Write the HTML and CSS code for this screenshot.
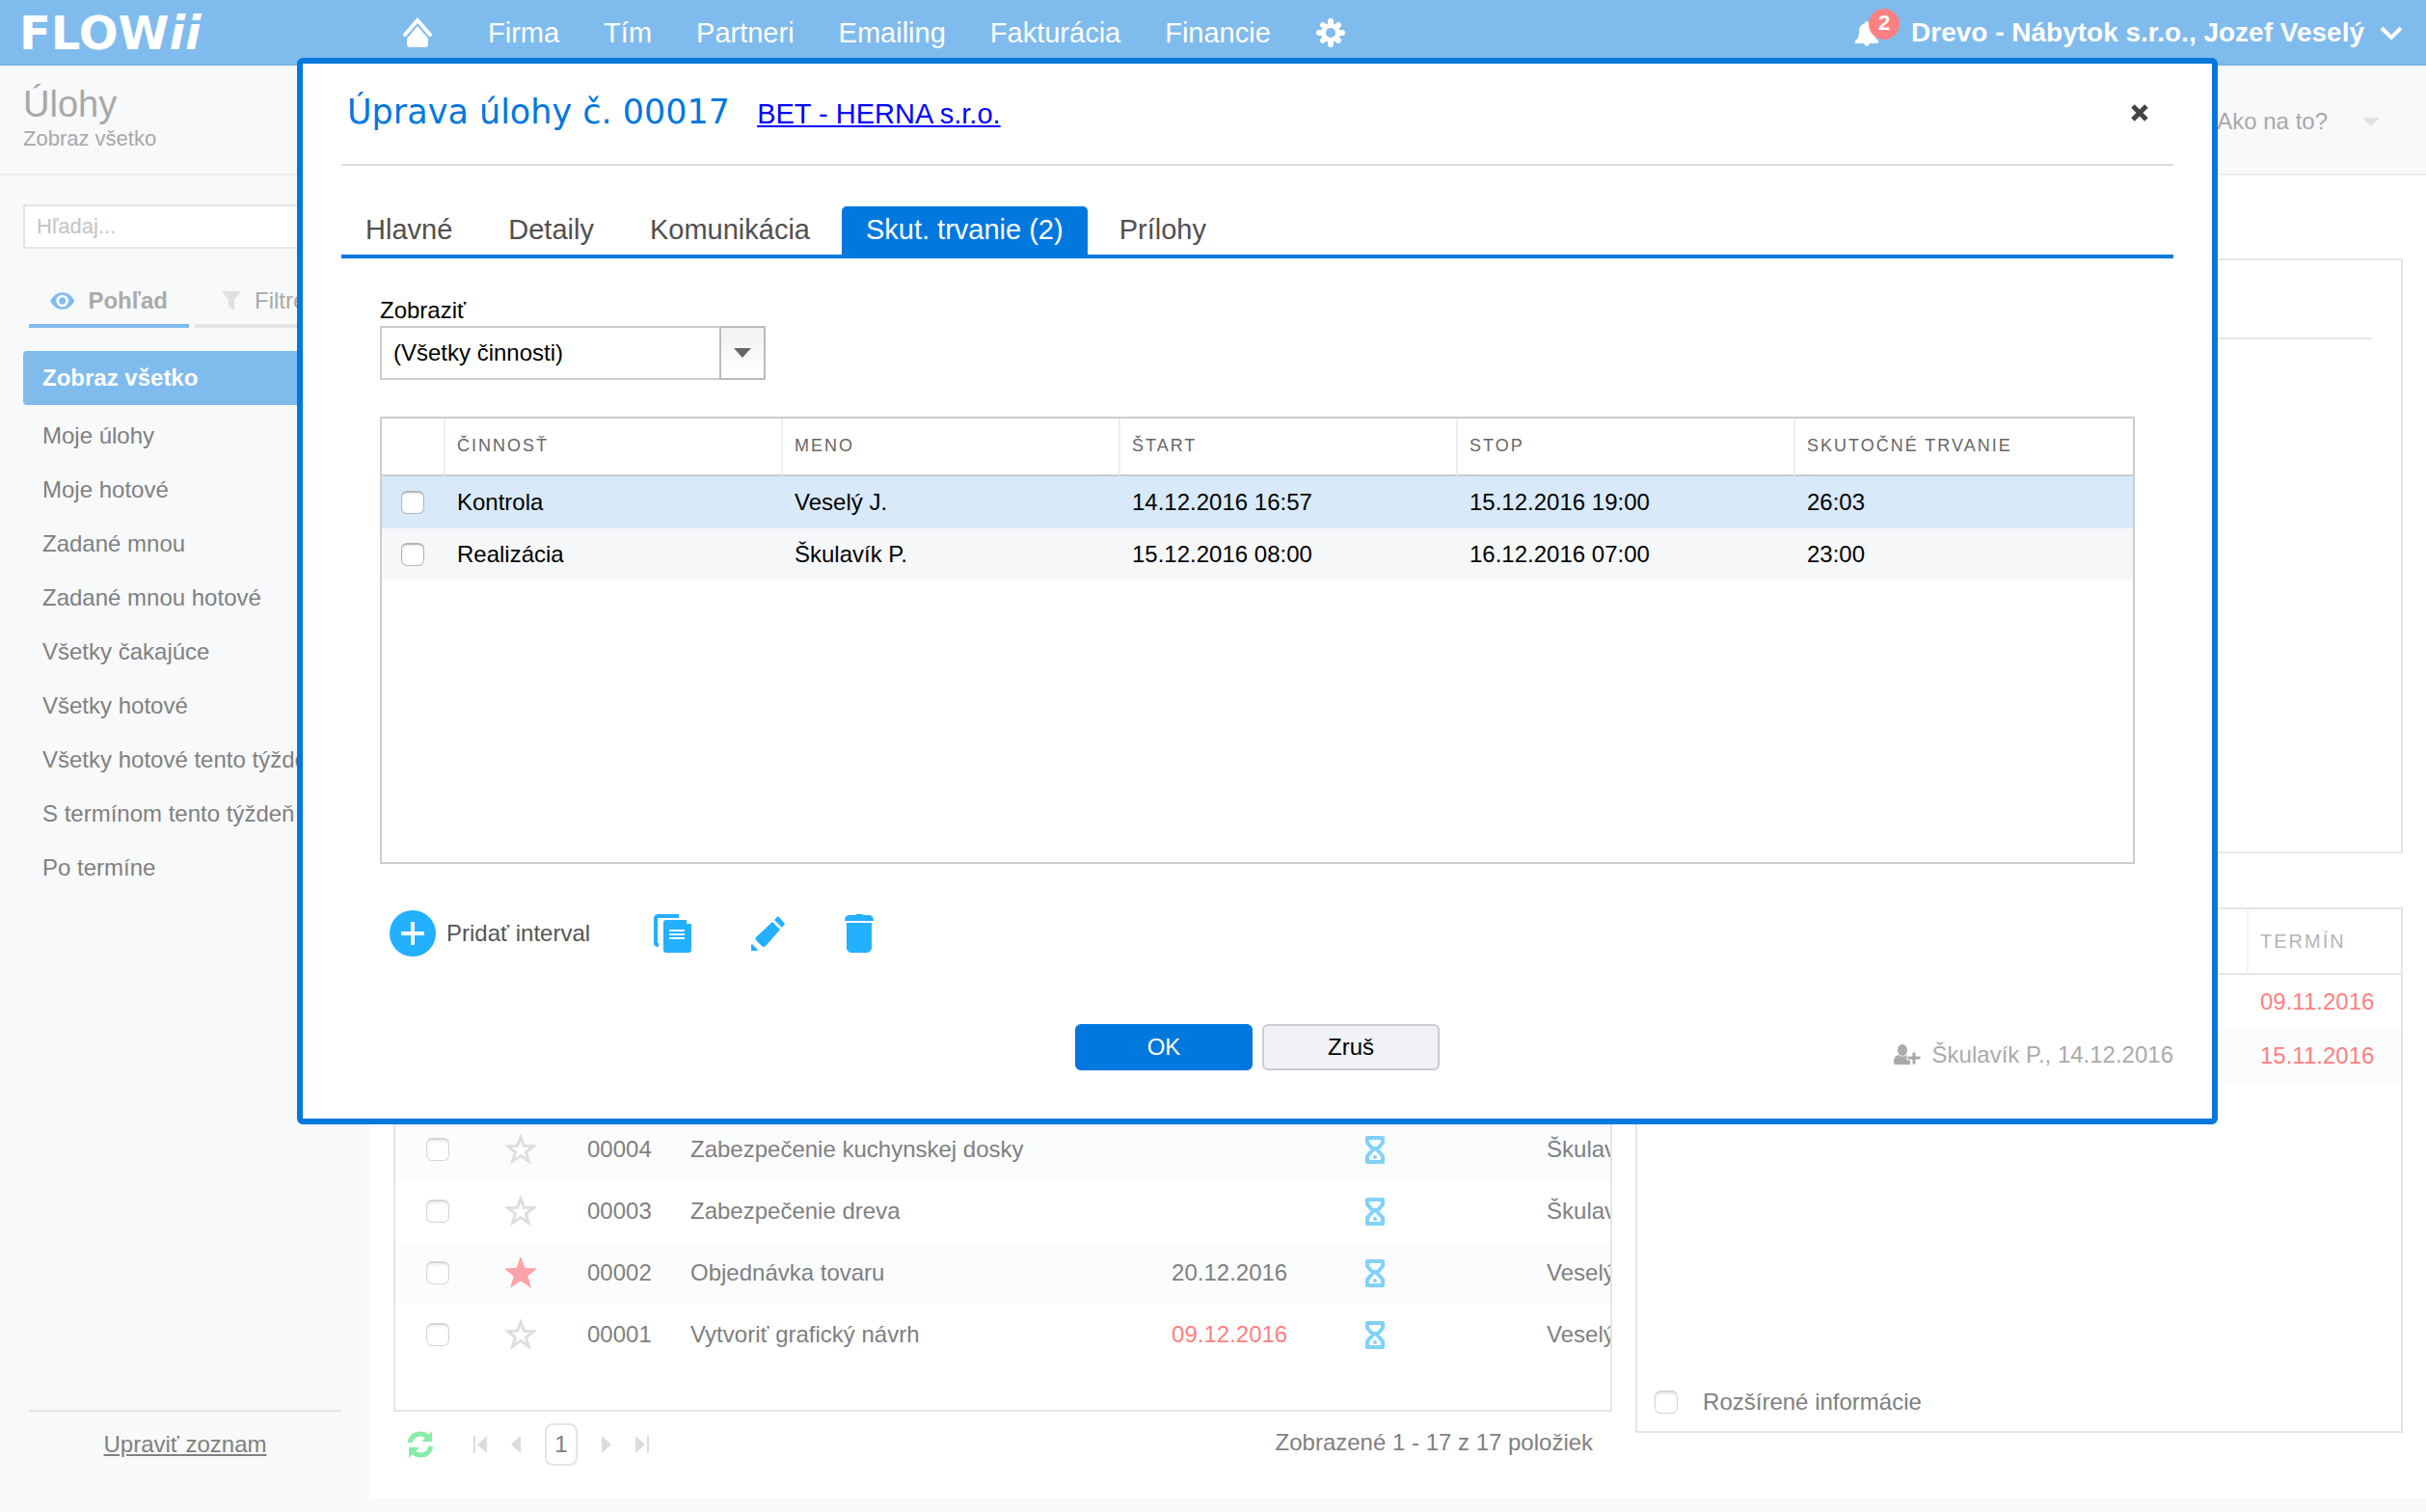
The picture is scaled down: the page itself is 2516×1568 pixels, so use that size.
FILE: index.html
```html
<!DOCTYPE html>
<html lang="sk">
<head>
  <meta charset="UTF-8">
  <title>Flowii - Úlohy</title>
  <link rel="stylesheet" href="styles.css">
</head>
<body>

  <!-- icons -->
  <svg class="sprite" aria-hidden="true">
    <symbol id="i-star" viewBox="0 0 32 32">
      <path d="M16 3l3.4 9.3 9.9.3-7.8 6.1 2.8 9.5L16 22.600l-8.300 5.600 2.800-9.500-7.800-6.100 9.900-.3z"/>
    </symbol>
    <symbol id="i-glass" viewBox="0 0 22 32">
      <path d="M3 4h16v5l-6 7 6 7v6H3v-6l6-7-6-7z" fill="#fff" stroke="#7fd2f8" stroke-width="4" stroke-linejoin="round"/>
      <path d="M7 13h8l-4 5z" fill="#7fd2f8"/>
      <circle cx="11" cy="24" r="2" fill="#7fd2f8"/>
    </symbol>
  </svg>

  <header class="topbar">
    <a class="logo" href="#">FLOW<i>ii</i></a>
    <nav class="nav">
      <a class="home" href="#" aria-label="Domov">
        <svg width="32" height="32" viewBox="0 0 32 32">
          <path d="M3 18L16 3l13 15" fill="none" stroke="#fff" stroke-width="4" stroke-linecap="round"/>
          <path d="M16 9l11 13v6q0 3-3 3H8q-3 0-3-3v-6z" fill="#fff"/>
        </svg>
      </a>
      <a href="#">Firma</a>
      <a href="#">Tím</a>
      <a href="#">Partneri</a>
      <a href="#">Emailing</a>
      <a href="#">Fakturácia</a>
      <a href="#">Financie</a>
      <a class="gear" href="#" aria-label="Nastavenia">
        <svg width="32" height="32" viewBox="0 0 32 32">
          <g stroke="#fff" stroke-width="6" stroke-linecap="round">
            <path d="M16 4v24M4 16h24M8 8l16 16M24 8L8 24"/>
          </g>
          <circle cx="16" cy="16" r="10" fill="#fff"/>
          <circle cx="16" cy="16" r="5" fill="#80bbed"/>
        </svg>
      </a>
    </nav>
    <a class="bell" href="#" aria-label="Upozornenia">
      <svg width="26" height="28" viewBox="0 0 26 28">
        <path d="M13 1q2 0 2 2 6 2 6 9 0 7 4 9v3H1v-3q4-2 4-9 0-7 6-9 0-2 2-2z" fill="#fff"/>
        <path d="M10 24h6q-1 3-3 3t-3-3z" fill="#fff"/>
      </svg>
      <span class="badge">2</span>
    </a>
    <button class="user" type="button">
      Drevo - Nábytok s.r.o., Jozef Veselý
      <svg width="24" height="16" viewBox="0 0 24 16"><path d="M2 3l10 10L22 3" fill="none" stroke="#fff" stroke-width="4"/></svg>
    </button>
  </header>

  <div class="subbar">
    <div>
      <h1>Úlohy</h1>
      <p>Zobraz všetko</p>
    </div>
    <button class="howto" type="button">
      Ako na to?
      <svg width="18" height="9" viewBox="0 0 18 9"><path d="M0 0h18L9 9z" fill="#dfe3e6"/></svg>
    </button>
  </div>

  <div class="page">
    <aside class="sidebar">
      <input class="search" type="text" placeholder="Hľadaj..." aria-label="Hľadaj">
      <div class="side-tabs">
        <button class="side-tab active" type="button">
          <svg width="26" height="20" viewBox="0 0 26 20">
            <path d="M0 10Q5 1 13 1t13 9q-5 9-13 9T0 10z" fill="#80bbed"/>
            <circle cx="13" cy="10" r="5" fill="#80bbed" stroke="#f8f9fb" stroke-width="3"/>
          </svg>
          Pohľad
        </button>
        <button class="side-tab" type="button">
          <svg width="20" height="20" viewBox="0 0 20 20"><path d="M0 0h20l-7 9v11l-6-4V9z" fill="#e0e0e0"/></svg>
          Filtre
        </button>
      </div>
      <nav class="views">
        <a class="active" href="#">Zobraz všetko</a>
        <a href="#">Moje úlohy</a>
        <a href="#">Moje hotové</a>
        <a href="#">Zadané mnou</a>
        <a href="#">Zadané mnou hotové</a>
        <a href="#">Všetky čakajúce</a>
        <a href="#">Všetky hotové</a>
        <a href="#">Všetky hotové tento týždeň</a>
        <a href="#">S termínom tento týždeň</a>
        <a href="#">Po termíne</a>
      </nav>
      <div class="side-footer"><a href="#">Upraviť zoznam</a></div>
    </aside>

    <main class="work">
      <section class="list">
        <div class="list-box">
          <table class="tasks">
            <colgroup>
              <col class="c-check"><col class="c-star"><col class="c-num"><col><col class="c-date"><col class="c-state"><col class="c-who">
            </colgroup>
            <tr>
              <td><input type="checkbox" aria-label="00004"></td>
              <td><svg class="star"><use href="#i-star"/></svg></td>
              <td>00004</td>
              <td>Zabezpečenie kuchynskej dosky</td>
              <td></td>
              <td><svg class="glass"><use href="#i-glass"/></svg></td>
              <td>Škulavík P.</td>
            </tr>
            <tr>
              <td><input type="checkbox" aria-label="00003"></td>
              <td><svg class="star"><use href="#i-star"/></svg></td>
              <td>00003</td>
              <td>Zabezpečenie dreva</td>
              <td></td>
              <td><svg class="glass"><use href="#i-glass"/></svg></td>
              <td>Škulavík P.</td>
            </tr>
            <tr>
              <td><input type="checkbox" aria-label="00002"></td>
              <td><svg class="star on"><use href="#i-star"/></svg></td>
              <td>00002</td>
              <td>Objednávka tovaru</td>
              <td>20.12.2016</td>
              <td><svg class="glass"><use href="#i-glass"/></svg></td>
              <td>Veselý J.</td>
            </tr>
            <tr>
              <td><input type="checkbox" aria-label="00001"></td>
              <td><svg class="star"><use href="#i-star"/></svg></td>
              <td>00001</td>
              <td>Vytvoriť grafický návrh</td>
              <td class="late">09.12.2016</td>
              <td><svg class="glass"><use href="#i-glass"/></svg></td>
              <td>Veselý J.</td>
            </tr>
          </table>
        </div>
        <div class="pager">
          <button class="refresh" type="button" aria-label="Obnoviť">
            <svg width="28" height="30" viewBox="0 0 28 30">
              <g fill="none" stroke="#86eda9" stroke-width="5">
                <path d="M3 13Q5 4 14 4q5 0 8 4"/>
                <path d="M25 17q-2 9-11 9-5 0-8-4"/>
              </g>
              <path d="M26 1v11H15zM2 29V18h11z" fill="#86eda9"/>
            </svg>
          </button>
          <button type="button" aria-label="Prvá"><svg width="14" height="18" viewBox="0 0 14 18"><path d="M0 0h2v18H0zM14 0v18L4 9z"/></svg></button>
          <button type="button" aria-label="Predošlá"><svg width="10" height="18" viewBox="0 0 10 18"><path d="M10 0v18L0 9z"/></svg></button>
          <button class="page-no" type="button">1</button>
          <button type="button" aria-label="Ďalšia"><svg width="10" height="18" viewBox="0 0 10 18"><path d="M0 0v18l10-9z"/></svg></button>
          <button type="button" aria-label="Posledná"><svg width="14" height="18" viewBox="0 0 14 18"><path d="M12 0h2v18h-2zM0 0v18l10-9z"/></svg></button>
          <span class="count">Zobrazené 1 - 17 z 17 položiek</span>
        </div>
      </section>

      <section class="side-panels">
        <div class="panel info"><div class="info-head"></div></div>
        <div class="panel terms">
          <table>
            <thead><tr><th></th><th>TERMÍN</th></tr></thead>
            <tbody>
              <tr><td></td><td>09.11.2016</td></tr>
              <tr><td></td><td>15.11.2016</td></tr>
            </tbody>
          </table>
          <label class="extended"><input type="checkbox"> Rozšírené informácie</label>
        </div>
      </section>
    </main>
  </div>

  <div class="modal" role="dialog" aria-labelledby="modal-title">
    <div class="modal-head">
      <h2 id="modal-title">Úprava úlohy č. 00017</h2>
      <a href="#">BET - HERNA s.r.o.</a>
      <button class="close" type="button" aria-label="Zavrieť">
        <svg width="18" height="18" viewBox="0 0 18 18"><path d="M2 2l14 14M16 2L2 16" stroke="#444" stroke-width="5"/></svg>
      </button>
    </div>

    <div class="tabs">
      <button type="button">Hlavné</button>
      <button type="button">Detaily</button>
      <button type="button">Komunikácia</button>
      <button class="active" type="button">Skut. trvanie (2)</button>
      <button type="button">Prílohy</button>
    </div>

    <div class="modal-body">
      <label class="field-label" for="activity">Zobraziť</label>
      <div class="select">
        <select id="activity">
          <option>(Všetky činnosti)</option>
        </select>
        <span class="arrow"><svg width="18" height="10" viewBox="0 0 18 10"><path d="M0 0h18L9 10z" fill="#666"/></svg></span>
      </div>

      <div class="grid">
        <table>
          <thead>
            <tr><th></th><th>ČINNOSŤ</th><th>MENO</th><th>ŠTART</th><th>STOP</th><th>SKUTOČNÉ TRVANIE</th></tr>
          </thead>
          <tbody>
            <tr class="selected">
              <td><input type="checkbox" aria-label="Kontrola"></td>
              <td>Kontrola</td><td>Veselý J.</td><td>14.12.2016 16:57</td><td>15.12.2016 19:00</td><td>26:03</td>
            </tr>
            <tr>
              <td><input type="checkbox" aria-label="Realizácia"></td>
              <td>Realizácia</td><td>Škulavík P.</td><td>15.12.2016 08:00</td><td>16.12.2016 07:00</td><td>23:00</td>
            </tr>
          </tbody>
        </table>
      </div>

      <div class="tools">
        <button class="add" type="button">
          <svg width="48" height="48" viewBox="0 0 48 48">
            <circle cx="24" cy="24" r="24" fill="#22b0ff"/>
            <path d="M24 12v24M12 24h24" stroke="#fff" stroke-width="4"/>
          </svg>
          Pridať interval
        </button>
        <button type="button" aria-label="Kopírovať">
          <svg width="40" height="40" viewBox="0 0 40 40">
            <path d="M26 2H5Q2 2 2 5v25q0 2 3 2" fill="none" stroke="#22b0ff" stroke-width="4"/>
            <path d="M13 6h21v4h5v27q0 3-3 3H13q-3 0-3-3V9q0-3 3-3z" fill="#22b0ff"/>
            <path d="M16 17h16M16 21h16M16 25h16" stroke="#fff" stroke-width="2"/>
          </svg>
        </button>
        <button type="button" aria-label="Upraviť">
          <svg width="36" height="36" viewBox="0 0 36 36" fill="#22b0ff">
            <path d="M28 0l7 8-3 4-8-8zM22 6l8 8-15 17q-2 2-4 0l-6-6q-1-2 0-3zM1 29l6 6-1 1H0v-6z"/>
          </svg>
        </button>
        <button type="button" aria-label="Zmazať">
          <svg width="30" height="40" viewBox="0 0 30 40" fill="#22b0ff">
            <path d="M12 0h6l1 1h7q4 1 4 6H0q0-5 4-6h7zM2 9h26v27q-2 4-5 4H7q-3 0-5-4z"/>
          </svg>
        </button>
      </div>
    </div>

    <div class="modal-foot">
      <button class="btn primary" type="button">OK</button>
      <button class="btn" type="button">Zruš</button>
      <span class="author">
        <svg width="28" height="22" viewBox="0 0 28 22" fill="#aaa">
          <ellipse cx="9" cy="6" rx="5" ry="6"/>
          <path d="M5 11q4 3 9 0v4h3v6H2q-2 0-2-3 0-6 5-7z"/>
          <path d="M19 8h4v4h5v4h-5v5h-4v-5h-5v-4h5z" stroke="#fff" stroke-width="1"/>
        </svg>
        Škulavík P., 14.12.2016
      </span>
    </div>
  </div>

</body>
</html>
```
FILE: styles.css
```css
* {
  box-sizing: border-box;
}
body {
  margin: 0;
  min-height: 100vh;
  padding-bottom: 14px;
  display: flex;
  flex-direction: column;
  position: relative;
  background: #f8f9fb;
  color: #808080;
  font-family: "Liberation Sans", Arial, sans-serif;
  font-size: 24px;
  line-height: 28px;
}
h1, h2, p {
  margin: 0;
  font-weight: normal;
}
button {
  padding: 0;
  border: none;
  background: none;
  color: inherit;
  font: inherit;
  cursor: pointer;
}
svg {
  display: block;
}
table {
  width: 100%;
  border-spacing: 0;
  table-layout: fixed;
}
td, th {
  padding: 0;
  text-align: left;
  white-space: nowrap;
}
input[type="checkbox"] {
  appearance: none;
  display: block;
  width: 24px;
  height: 24px;
  margin: 0;
  border: 1px solid #d6d6d6;
  border-top-width: 2px;
  border-radius: 6px;
  background: #fff;
  box-shadow: inset 0 2px 3px #eee;
}
.sprite {
  position: absolute;
  width: 0;
  height: 0;
}

/* top bar */
.topbar {
  height: 68px;
  display: flex;
  align-items: center;
  padding: 2px 24px 0 20px;
  background: #80bbed;
  border-bottom: 2px solid #7bb2e2;
  color: #fff;
}
.topbar a {
  color: #fff;
  text-decoration: none;
}
.logo {
  width: 397px;
  font: bold 48px "DejaVu Sans", sans-serif;
}
.nav {
  flex: 1;
  display: flex;
  align-items: center;
  gap: 46px;
  font-size: 29px;
}
.home {
  margin-right: 11px;
}
.bell {
  position: relative;
  margin: 2px 33px 0 0;
}
.badge {
  position: absolute;
  left: 15px;
  top: -12px;
  width: 32px;
  height: 32px;
  border-radius: 50%;
  background: #ff8080;
  font-size: 22px;
  font-weight: bold;
  line-height: 30px;
  text-align: center;
}
.user {
  display: flex;
  align-items: center;
  gap: 16px;
  font-size: 28px;
  font-weight: bold;
}

/* page title */
.subbar {
  height: 114px;
  display: flex;
  justify-content: space-between;
  padding: 18px 48px 0 24px;
  border-bottom: 2px solid #ebeef1;
  color: #a8a8a8;
}
.subbar h1 {
  font-size: 38px;
  line-height: 44px;
}
.subbar p {
  font-size: 22px;
  line-height: 28px;
}
.howto {
  align-self: flex-start;
  display: flex;
  align-items: center;
  gap: 36px;
  padding-top: 26px;
}

/* sidebar */
.page {
  flex: 1;
  display: flex;
}
.sidebar {
  flex: none;
  width: 384px;
  display: flex;
  flex-direction: column;
  padding: 30px 30px 0 24px;
}
.search {
  height: 46px;
  padding: 0 12px;
  border: 2px solid #e5e5e5;
  background: #fff;
  font: inherit;
  font-size: 22px;
}
.search::placeholder {
  color: #c4c4c4;
}
.side-tabs {
  display: flex;
  gap: 6px;
  margin: 34px 0 24px 6px;
}
.side-tab {
  width: 166px;
  height: 48px;
  display: flex;
  align-items: center;
  gap: 14px;
  padding: 0 22px 4px;
  border-bottom: 4px solid #e5e5e5;
  color: #aaa;
}
.side-tab + .side-tab {
  padding-left: 28px;
}
.side-tab.active {
  border-color: #80bbed;
  font-weight: bold;
}
.views {
  display: flex;
  flex-direction: column;
}
.views a {
  height: 56px;
  padding-left: 20px;
  color: #808080;
  line-height: 56px;
  text-decoration: none;
  white-space: nowrap;
}
.views .active {
  margin-bottom: 4px;
  border-radius: 4px;
  background: #80bbed;
  color: #fff;
  font-weight: bold;
}
.side-footer {
  height: 92px;
  margin: auto 0 0 6px;
  padding-top: 20px;
  border-top: 2px solid #e5e5e5;
  text-align: center;
}
.side-footer a {
  color: #808080;
}

/* workspace */
.work {
  flex: 1;
  display: grid;
  grid-template-columns: minmax(0, 27fr) minmax(0, 17fr);
  gap: 24px;
  padding: 86px 24px 0;
  background: #fff;
}
.list {
  display: flex;
  flex-direction: column;
}
.list-box {
  flex: 1;
  display: flex;
  flex-direction: column;
  justify-content: flex-end;
  padding-bottom: 46px;
  border: 2px solid #e5e5e5;
}
.tasks tr {
  height: 64px;
}
.tasks tr:nth-child(odd) {
  background: #fbfcfe;
}
.tasks td {
  overflow: hidden;
}
.tasks td:first-child {
  padding-left: 32px;
}
.c-check { width: 114px; }
.c-star { width: 85px; }
.c-num { width: 107px; }
.c-date { width: 200px; }
.c-state { width: 189px; }
.c-who { width: 66px; }
.star {
  width: 32px;
  height: 32px;
  fill: #fff;
  stroke: #dedede;
  stroke-width: 3;
}
.star.on {
  fill: #ffa3a8;
  stroke: #ffa3a8;
}
.glass {
  width: 22px;
  height: 32px;
}
.late, .terms td {
  color: #ff8080;
}
.pager {
  height: 90px;
  display: flex;
  align-items: flex-start;
  gap: 25px;
  padding: 12px 20px 0 14px;
}
.pager > * {
  height: 44px;
  line-height: 44px;
}
.pager path {
  fill: #dcdcdc;
}
.pager .refresh {
  margin-right: 16px;
}
.refresh g path {
  fill: none;
}
.refresh svg > path {
  fill: #86eda9;
}
.pager .page-no {
  width: 34px;
  border: 2px solid #e5e5e5;
  border-radius: 8px;
  line-height: 40px;
}
.pager .count {
  margin-left: auto;
  line-height: 40px;
}
.side-panels {
  display: flex;
  flex-direction: column;
  gap: 56px;
  padding-bottom: 68px;
}
.panel {
  border: 2px solid #e5e5e5;
}
.info {
  flex: 17 1 0;
  padding: 0 30px;
}
.info-head {
  height: 82px;
  border-bottom: 2px solid #e5e5e5;
}
.terms {
  flex: 15 1 0;
  display: flex;
  flex-direction: column;
}
.terms th {
  height: 68px;
  border-bottom: 2px solid #e5e5e5;
  color: #b5b5b5;
  font-size: 20px;
  font-weight: normal;
  letter-spacing: 2px;
}
.terms th:last-child {
  width: 160px;
  border-left: 2px solid #f4f4f4;
  padding-left: 12px;
}
.terms td:last-child {
  padding-left: 14px;
}
.terms td {
  height: 56px;
}
.terms tbody tr:nth-child(even) {
  background: #fbfcfe;
}
.extended {
  display: flex;
  align-items: center;
  gap: 26px;
  margin-top: auto;
  padding: 0 18px 16px;
}

/* task dialog */
.modal {
  position: absolute;
  top: 60px;
  left: 308px;
  right: 216px;
  padding: 0 40px 50px;
  border: 6px solid #0078de;
  border-radius: 6px;
  background: #fff;
  color: #000;
}
.modal-head {
  height: 106px;
  display: flex;
  align-items: baseline;
  gap: 28px;
  padding: 28px 26px 0 6px;
  border-bottom: 2px solid #dcdcdc;
}
.modal-head h2 {
  color: #0078de;
  font-family: "DejaVu Sans", sans-serif;
  font-size: 35px;
  line-height: 44px;
}
.modal-head a {
  color: #00f;
  font-size: 29px;
}
.close {
  align-self: flex-start;
  margin-left: auto;
  padding-top: 14px;
}
.tabs {
  display: flex;
  gap: 8px;
  margin-top: 42px;
  border-bottom: 4px solid #0078de;
  color: #505050;
  font-size: 29px;
}
.tabs button {
  height: 50px;
  padding: 0 25px 2px;
}
.tabs .active {
  border-radius: 5px 5px 0 0;
  background: #0078de;
  color: #fff;
}
.modal-body {
  padding: 40px 40px 0;
}
.field-label {
  display: block;
  margin-bottom: 2px;
}
.select {
  position: relative;
  width: 400px;
  height: 56px;
}
.select select {
  appearance: none;
  width: 100%;
  height: 100%;
  padding: 0 60px 0 12px;
  border: 2px solid #ccc;
  border-radius: 0;
  background: #fff;
  color: #000;
  font: inherit;
}
.arrow {
  position: absolute;
  top: 0;
  right: 0;
  bottom: 0;
  width: 48px;
  display: flex;
  align-items: center;
  justify-content: center;
  border: 2px solid #bbb;
  background: linear-gradient(#f1f1f1, #fff);
  pointer-events: none;
}
.grid {
  min-height: 464px;
  margin-top: 38px;
  border: 2px solid #ccc;
}
.grid th {
  height: 60px;
  padding: 0 0 2px 12px;
  border-right: 2px solid #eee;
  border-bottom: 2px solid #ccc;
  color: #666;
  font-size: 18px;
  font-weight: normal;
  letter-spacing: 2px;
}
.grid th:first-child {
  width: 66px;
}
.grid th:last-child {
  border-right: none;
}
.grid td {
  height: 54px;
  padding-left: 12px;
}
.grid td:first-child {
  padding-left: 20px;
}
.grid tbody tr {
  background: #f6f7f9;
}
.grid tbody .selected {
  background: #d8e9f9;
}
.grid input[type="checkbox"] {
  border-color: #b4b4b4;
}
.tools {
  display: flex;
  align-items: center;
  gap: 61px;
  margin-top: 48px;
  padding-left: 10px;
}
.add {
  display: flex;
  align-items: center;
  gap: 11px;
  margin-right: 5px;
  color: #555;
}
.modal-foot {
  display: flex;
  justify-content: center;
  gap: 10px;
  position: relative;
  margin-top: 70px;
}
.btn {
  width: 184px;
  height: 48px;
  border: 2px solid #ccc;
  border-radius: 6px;
  background: #f1f2f7;
}
.btn.primary {
  border-color: #0078de;
  background: #0078de;
  color: #fff;
}
.author {
  position: absolute;
  right: 0;
  bottom: 2px;
  display: flex;
  align-items: center;
  gap: 12px;
  color: #aaa;
}
```
